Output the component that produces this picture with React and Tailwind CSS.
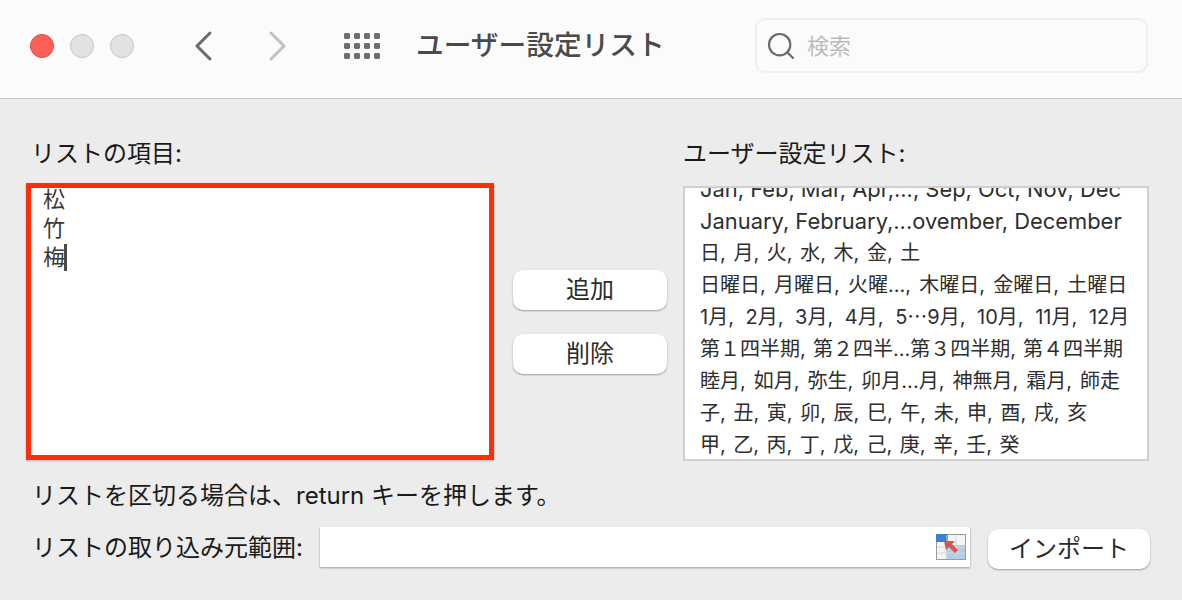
import React from "react";
import { Search } from "lucide-react";

const font = "font-['Inter','Noto_Sans_CJK_JP',sans-serif]";

const lists = [
  { text: "Jan, Feb, Mar, Apr,..., Sep, Oct, Nov, Dec", cls: "text-[21.9px]" },
  { text: "January, February,...ovember, December", cls: "text-[21.9px]" },
  { text: "日, 月, 火, 水, 木, 金, 土", cls: "[word-spacing:2px]" },
  { text: "日曜日, 月曜日, 火曜..., 木曜日, 金曜日, 土曜日", cls: "[word-spacing:2.6px]" },
  { text: "1月, 2月, 3月, 4月, 5⋯9月, 10月, 11月, 12月", cls: "[word-spacing:6px]" },
  { text: "第１四半期, 第２四半...第３四半期, 第４四半期", cls: "[word-spacing:1.5px]" },
  { text: "睦月, 如月, 弥生, 卯月...月, 神無月, 霜月, 師走", cls: "[word-spacing:2.4px]" },
  { text: "子, 丑, 寅, 卯, 辰, 巳, 午, 未, 申, 酉, 戌, 亥", cls: "[word-spacing:2px]" },
  { text: "甲, 乙, 丙, 丁, 戊, 己, 庚, 辛, 壬, 癸", cls: "[word-spacing:1.9px]" },
];

const Dot = ({ className }) => (
  <span className={`w-6 h-6 rounded-full border ${className}`}></span>
);

const Chevron = ({ d, color }) => (
  <svg width="20" height="32" viewBox="0 0 20 32" fill="none" stroke={color} strokeWidth="3" strokeLinecap="round" strokeLinejoin="round">
    <path d={d} />
  </svg>
);

const AppsIcon = () => (
  <svg width="36" height="26" viewBox="0 0 36 26" fill="#6e6e6e">
    {[0, 10, 20].map((y) =>
      [0, 10, 20, 30].map((x) => (
        <rect key={`${x}-${y}`} x={x} y={y} width="6" height="6" rx="1.4" />
      ))
    )}
  </svg>
);

const RangeIcon = () => (
  <svg width="30" height="26" viewBox="0 0 30 26">
    <rect x="0" y="0" width="30" height="26" fill="#9a9a9a" />
    <rect x="1" y="1" width="28" height="24" fill="#f4f4f4" />
    <rect x="0" y="0" width="12" height="8" fill="#3d7fc9" />
    <rect x="10" y="11" width="19" height="14" fill="#b3cde6" />
    <path d="M1 13h28M1 19h28M11 1v24M20 1v24" stroke="#d6d6d6" strokeWidth="1" />
    <path d="M8 7h11l-3 3 6 6-3 3-6-6-3 3z" fill="#d9534f" />
  </svg>
);

const MacButton = ({ children, className }) => (
  <button className={`h-10 bg-white rounded-[10px] text-[24px] text-[#2b2b2b] shadow-[0_1px_2px_rgba(0,0,0,0.35)] flex items-center justify-center ${className}`}>
    {children}
  </button>
);

export default function App() {
  return (
    <div className={`w-[1182px] h-[600px] overflow-hidden bg-[#ececec] text-[#1a1a1a] ${font}`}>
      {/* Toolbar */}
      <div className="h-[99px] bg-[#fbfbfb] border-b border-[#c8c8c8] flex items-center pl-[30px] pr-[34px]">
        <div className="flex gap-4 mt-[-7px]">
          <Dot className="bg-[#fe5f57] border-[#e8463f]" />
          <Dot className="bg-[#e2e2e2] border-[#c6c6c6]" />
          <Dot className="bg-[#e2e2e2] border-[#c6c6c6]" />
        </div>
        <div className="ml-[60px] mt-[-7px]">
          <Chevron d="M16 3 L3 16 L16 29" color="#6a6a6a" />
        </div>
        <div className="ml-[53px] mt-[-7px]">
          <Chevron d="M4 3 L17 16 L4 29" color="#c0c0c0" />
        </div>
        <div className="ml-[57px] mt-[-7px]">
          <AppsIcon />
        </div>
        <h1 className="ml-[36px] mt-[-6px] text-[27.7px] font-medium text-[#4a4a4a] whitespace-nowrap">ユーザー設定リスト</h1>
        <div className="ml-auto mt-[-7px] w-[393px] h-[55px] border-2 border-[#efefef] rounded-[10px] flex items-center pl-2 gap-[10px]">
          <Search size={32} strokeWidth={1.6} className="text-[#6a6a6a]" />
          <span className="text-[22px] text-[#bdbdbd] mt-[2px]">検索</span>
        </div>
      </div>

      {/* Lists */}
      <div className="flex pl-[26px] pt-10">
        <div className="w-[468px]">
          <div className="pl-[5px] text-[24px] leading-[30px] h-11">リストの項目:</div>
          <div className="h-[277px] bg-white border-[5px] border-[#ff2d0a] pl-3 text-[22px] leading-[29px] text-[#3a3a3a] shadow-[0_1px_2px_rgba(0,0,0,0.25)]">
            <div className="mt-[-3px]">松</div>
            <div>竹</div>
            <div className="flex items-center">
              梅
              <span className="w-[3px] h-[27px] bg-[#4a4a4a] ml-[-1px]"></span>
            </div>
          </div>
        </div>

        <div className="w-[154px] ml-[19px] pt-[131px] flex flex-col gap-6">
          <MacButton>追加</MacButton>
          <MacButton>削除</MacButton>
        </div>

        <div className="w-[466px] ml-[16px]">
          <div className="text-[24px] leading-[30px] h-[47px] whitespace-nowrap">ユーザー設定リスト:</div>
          <div className="h-[275px] bg-white border-2 border-[#cfcfcf] overflow-hidden pl-[15px] text-[20px] leading-8 text-[#2e2e2e] whitespace-nowrap">
            <div className="mt-[-15px]">
              {lists.map((row) => (
                <div key={row.text} className={row.cls}>{row.text}</div>
              ))}
            </div>
          </div>
        </div>
      </div>

      {/* Hint + import */}
      <div className="pl-8 mt-[20px] text-[24px] leading-[30px]">リストを区切る場合は、return キーを押します。</div>
      <div className="flex items-center pl-8 mt-[16px]">
        <span className="text-[24px] leading-[30px] w-[288px] whitespace-nowrap">リストの取り込み元範囲:</span>
        <div className="w-[650px] h-10 mb-[2px] bg-white shadow-[0_1px_2px_rgba(0,0,0,0.35)] flex items-center justify-end pr-1">
          <RangeIcon />
        </div>
        <MacButton className="w-[162px] ml-[18px] mt-[2px]">インポート</MacButton>
      </div>
    </div>
  );
}
